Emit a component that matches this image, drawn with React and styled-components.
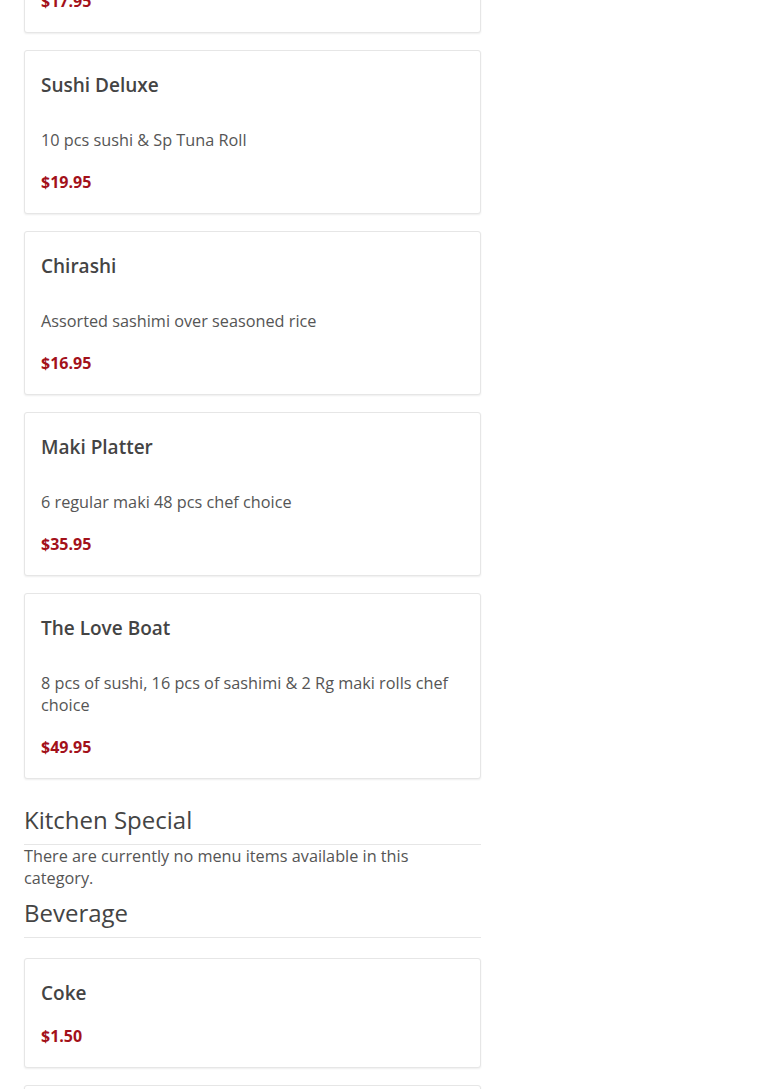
import styled, { createGlobalStyle } from "styled-components";

const GlobalStyle = createGlobalStyle`
  html, body {
    margin: 0;
    padding: 0;
    background: #fff;
  }
  body {
    font-family: "Open Sans", "Noto Sans", sans-serif;
    color: #555;
    overflow: hidden;
  }
`;

const Page = styled.div`
  width: 457px;
  padding: 0 24px;
  margin-top: -131px;
`;

const Section = styled.section`
  display: flex;
  flex-direction: column;
`;

const SectionTitle = styled.h2`
  margin: 11px 0 0;
  padding-bottom: 11px;
  border-bottom: 1px solid #e6e6e6;
  font-size: 24px;
  line-height: 26px;
  font-weight: 400;
  color: #444;
`;

const ItemList = styled.div`
  display: flex;
  flex-direction: column;
  gap: 17px;
  padding-top: ${(props) => (props.noTop ? "0" : "20px")};
  margin-bottom: 17px;
`;

const Card = styled.div`
  display: flex;
  flex-direction: column;
  border: 1px solid #e6e6e6;
  border-radius: 3px;
  box-shadow: 0 1px 2px rgba(0, 0, 0, 0.07);
  padding: 16px 16px 20px;
  background: #fff;
`;

const ItemName = styled.h3`
  margin: 0 0 14px;
  font-size: 19px;
  line-height: 36px;
  font-weight: 600;
  color: #444;
`;

const ItemDesc = styled.p`
  margin: 12px 0 20px;
  font-size: 16.25px;
  line-height: 22px;
  color: #555;
`;

const Price = styled.div`
  font-size: 16px;
  line-height: 22px;
  font-weight: 700;
  color: #a3111a;
`;

const Empty = styled.p`
  margin: 0;
  max-width: 430px;
  font-size: 16.25px;
  line-height: 22px;
  color: #555;
`;

const sushi = [
  { name: "Sushi Regular", desc: "8 pcs sushi & California Roll", price: "$17.95" },
  { name: "Sushi Deluxe", desc: "10 pcs sushi & Sp Tuna Roll", price: "$19.95" },
  { name: "Chirashi", desc: "Assorted sashimi over seasoned rice", price: "$16.95" },
  { name: "Maki Platter", desc: "6 regular maki 48 pcs chef choice", price: "$35.95" },
  {
    name: "The Love Boat",
    desc: "8 pcs of sushi, 16 pcs of sashimi & 2 Rg maki rolls chef choice",
    price: "$49.95",
  },
];

const beverage = [
  { name: "Coke", price: "$1.50" },
  { name: "Diet Coke", price: "$1.50" },
];

function MenuItem({ item }) {
  return (
    <Card>
      <ItemName>{item.name}</ItemName>
      {item.desc && <ItemDesc>{item.desc}</ItemDesc>}
      <Price>{item.price}</Price>
    </Card>
  );
}

export default function App() {
  return (
    <>
      <GlobalStyle />
      <Page>
        <Section>
          <ItemList noTop>
            {sushi.map((item) => (
              <MenuItem key={item.name} item={item} />
            ))}
          </ItemList>
        </Section>
        <Section>
          <SectionTitle>Kitchen Special</SectionTitle>
          <Empty>There are currently no menu items available in this category.</Empty>
        </Section>
        <Section>
          <SectionTitle>Beverage</SectionTitle>
          <ItemList>
            {beverage.map((item) => (
              <MenuItem key={item.name} item={item} />
            ))}
          </ItemList>
        </Section>
      </Page>
    </>
  );
}
